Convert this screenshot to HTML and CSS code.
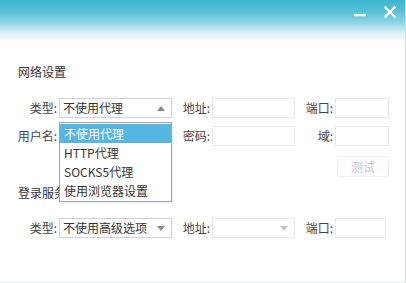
FILE: index.html
```html
<!DOCTYPE html>
<html>
<head>
<meta charset="utf-8">
<link rel="stylesheet" href="styles.css">
</head>
<body>
<div class="window">
  <div class="titlebar">
    <svg class="tb-icon" width="14" height="14" viewBox="0 0 14 14"><rect x="1" y="8" width="12" height="2.2" fill="#fff"/></svg>
    <svg class="tb-icon close" width="14" height="14" viewBox="0 0 14 14"><path d="M2.5 2.5 L11.5 11.5 M11.5 2.5 L2.5 11.5" stroke="#fff" stroke-width="2.4" stroke-linecap="square"/></svg>
  </div>

  <div class="section-title">网络设置</div>

  <div class="form">
    <label class="lbl">类型:</label>
    <div class="select open">
      <span>不使用代理</span>
      <svg class="arrow" width="8" height="5" viewBox="0 0 8 5"><path d="M0 5 L4 0 L8 5 Z" fill="#8a8a8a"/></svg>
      <ul class="menu">
        <li class="active">不使用代理</li>
        <li>HTTP代理</li>
        <li>SOCKS5代理</li>
        <li>使用浏览器设置</li>
      </ul>
    </div>
    <label class="lbl">地址:</label>
    <div class="input"></div>
    <label class="lbl">端口:</label>
    <div class="input"></div>

    <label class="lbl">用户名:</label>
    <div class="input"></div>
    <label class="lbl">密码:</label>
    <div class="input"></div>
    <label class="lbl">域:</label>
    <div class="input"></div>

    <div class="btn-cell"><button class="btn" disabled>测试</button></div>
  </div>

  <div class="section-title second">登录服务器设置</div>

  <div class="form row3">
    <label class="lbl">类型:</label>
    <div class="select">
      <span>不使用高级选项</span>
      <svg class="arrow" width="8" height="5" viewBox="0 0 8 5"><path d="M0 0 L8 0 L4 5 Z" fill="#8a8a8a"/></svg>
    </div>
    <label class="lbl">地址:</label>
    <div class="select light">
      <span></span>
      <svg class="arrow" width="8" height="5" viewBox="0 0 8 5"><path d="M0 0 L8 0 L4 5 Z" fill="#c4c4c4"/></svg>
    </div>
    <label class="lbl">端口:</label>
    <div class="input short"></div>
  </div>
</div>
</body>
</html>
```

FILE: styles.css
```css
html, body {
  margin: 0;
  padding: 0;
  background: #fff;
}
body {
  font-family: "Noto Sans CJK SC", "Noto Sans", sans-serif;
  font-size: 12px;
  color: #333;
}
.window {
  width: 405px;
  height: 282px;
  border-right: 1px solid #d4d8da;
  border-bottom: 1px solid #e4f0f4;
  background: linear-gradient(to bottom, #3db6cf 0px, #52c0d6 10px, #8ad3e3 22px, #d4eff5 32px, #ffffff 42px);
  position: relative;
  overflow: hidden;
}
.titlebar {
  height: 26px;
  display: flex;
  justify-content: flex-end;
  align-items: center;
  gap: 16px;
  padding-right: 8px;
}
.tb-icon {
  display: block;
}
.tb-icon.close {
  margin-top: -3px;
}
.section-title {
  margin: 38px 0 0 18px;
  font-size: 12px;
  line-height: 16px;
  color: #333;
}
.section-title.second {
  margin-top: 11px;
}
.form {
  display: grid;
  grid-template-columns: 57px 113px 36px 83px 36px 54px;
  grid-auto-rows: 20px;
  column-gap: 2px;
  row-gap: 8px;
  margin-top: 18px;
}
.form.row3 {
  margin-top: 17px;
  grid-template-columns: 57px 113px 36px 83px 36px 51px;
}
.lbl {
  text-align: right;
  line-height: 20px;
  color: #444;
  white-space: nowrap;
}
.input {
  border: 1px solid #e6e8ea;
  background: #fff;
  box-sizing: border-box;
}
.select {
  position: relative;
  border: 1px solid #d0d3d6;
  background: #fff;
  box-sizing: border-box;
  display: flex;
  align-items: center;
  justify-content: space-between;
  padding: 0 6px 0 3px;
  line-height: 18px;
  color: #333;
}
.select.light {
  border-color: #e6e8ea;
}
.arrow {
  display: block;
}
.menu {
  position: absolute;
  left: -1px;
  top: 23px;
  width: 113px;
  box-sizing: border-box;
  margin: 0;
  padding: 1px 0 1px 0;
  list-style: none;
  border: 1px solid #9aa6b2;
  background: #fff;
  z-index: 5;
  box-shadow: 1px 1px 2px rgba(0,0,0,0.08);
}
.menu li {
  height: 19px;
  line-height: 19px;
  padding-left: 4px;
  color: #333;
}
.menu li.active {
  background: #55b6e2;
  color: #fff;
}
.btn-cell {
  grid-column: 6;
  grid-row: 3;
  padding-top: 2px;
}
.btn {
  width: 52px;
  height: 21px;
  margin-left: 2px;
  border: 1px solid #eceeef;
  border-radius: 2px;
  background: #fff;
  color: #c4c8cb;
  font-family: "Noto Sans CJK SC", sans-serif;
  font-size: 12px;
  padding: 0;
}
```
